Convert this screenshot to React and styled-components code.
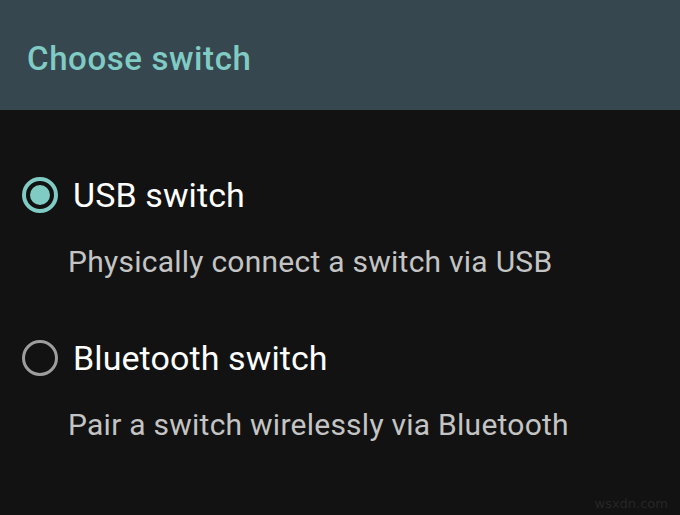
import React from "react";
import styled, { createGlobalStyle } from "styled-components";

const Global = createGlobalStyle`
  html, body { margin: 0; padding: 0; background: #121212; }
  body { font-family: Roboto, "Noto Sans", sans-serif; -webkit-font-smoothing: antialiased; }
`;

const Screen = styled.div`
  position: relative;
  width: 680px;
  height: 515px;
  background: #121212;
  overflow: hidden;
`;

const Header = styled.header`
  box-sizing: border-box;
  height: 110px;
  padding: 42px 0 0 27px;
  background: #37474f;
`;

const Title = styled.h1`
  margin: 0;
  font-size: 33px;
  line-height: 33px;
  font-weight: 500;
  letter-spacing: 0.6px;
  color: #80cbc4;
`;

const List = styled.div`
  display: flex;
  flex-direction: column;
  padding: 67px 0 0 22px;
`;

const Option = styled.div`
  display: flex;
  flex-direction: column;
  margin-top: ${(p) => (p.$first ? 0 : 63)}px;
`;

const Row = styled.label`
  display: flex;
  align-items: center;
  gap: 15px;
`;

const Radio = styled.span`
  box-sizing: border-box;
  width: 36px;
  height: 36px;
  border-radius: 50%;
  border: ${(p) => (p.$checked ? "4px solid #80cbc4" : "3px solid #9e9e9e")};
  display: flex;
  align-items: center;
  justify-content: center;
  &::after {
    content: "";
    display: ${(p) => (p.$checked ? "block" : "none")};
    width: 20px;
    height: 20px;
    border-radius: 50%;
    background: #80cbc4;
  }
`;

const Label = styled.span`
  font-size: 34px;
  line-height: 34px;
  letter-spacing: 0.1px;
  color: #ffffff;
`;

const Description = styled.p`
  margin: 34px 0 0 46px;
  font-size: 30px;
  line-height: 30px;
  letter-spacing: 0.25px;
  color: #c4c4c4;
`;

const Watermark = styled.span`
  position: absolute;
  right: 12px;
  bottom: 4px;
  font-family: "DejaVu Sans", sans-serif;
  font-size: 13px;
  color: #262626;
`;

const options = [
  { label: "USB switch", desc: "Physically connect a switch via USB", checked: true },
  { label: "Bluetooth switch", desc: "Pair a switch wirelessly via Bluetooth", checked: false },
];

export default function App() {
  return (
    <Screen>
      <Global />
      <Header>
        <Title>Choose switch</Title>
      </Header>
      <List>
        {options.map((o, i) => (
          <Option key={o.label} $first={i === 0}>
            <Row>
              <Radio $checked={o.checked} />
              <Label>{o.label}</Label>
            </Row>
            <Description>{o.desc}</Description>
          </Option>
        ))}
      </List>
      <Watermark>wsxdn.com</Watermark>
    </Screen>
  );
}
